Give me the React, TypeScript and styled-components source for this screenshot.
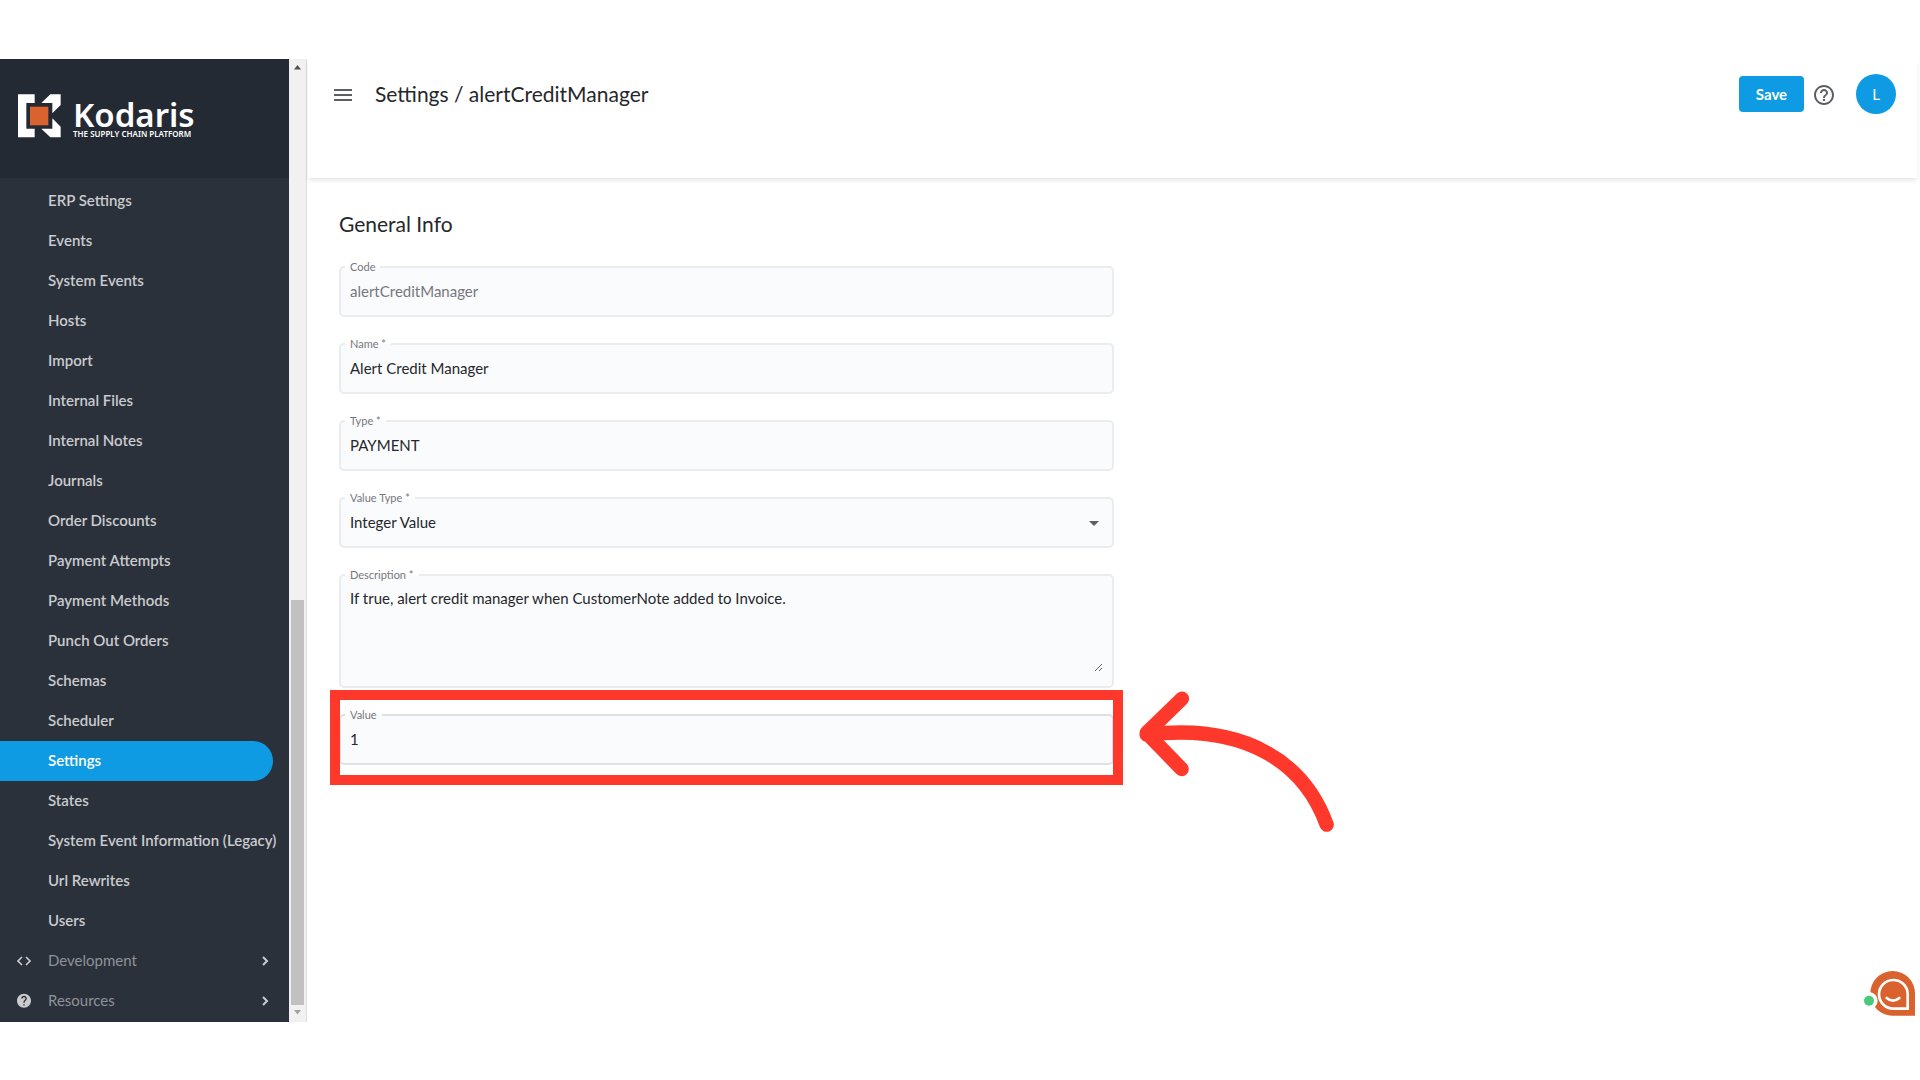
import React, { useId } from "react";
import styled, { createGlobalStyle, css } from "styled-components";

const GlobalStyle = createGlobalStyle`
  *, *::before, *::after { box-sizing: border-box; }
  body { margin: 0; background: #fff; }
  body, button, input, select, textarea {
    font-family: Lato, "Open Sans", sans-serif;
  }
`;

const Page = styled.div`
  display: flex;
  min-height: 100vh;
  padding: 59px 0 58px;
  color: #26272b;
`;

const Sidebar = styled.aside`
  display: flex;
  flex: none;
  width: 307px;
  border-right: 1px solid #dcdcdc;
`;

const SidebarBody = styled.div`
  display: flex;
  flex: 1;
  flex-direction: column;
  min-width: 0;
  background: #2b313b;
`;

const Brand = styled.a`
  display: flex;
  align-items: flex-start;
  gap: 12px;
  height: 119px;
  margin-bottom: 3px;
  padding: 35px 18px 0;
  background: #242a34;
  color: #fff;
  text-decoration: none;
`;

const BrandText = styled.span`
  display: flex;
  flex-direction: column;
  font-family: "Noto Sans", sans-serif;
`;

const BrandName = styled.span`
  padding-top: 6px;
  font-size: 33px;
  font-weight: 600;
  line-height: 30px;
`;

const Tagline = styled.span`
  font-size: 8px;
  font-weight: 600;
  line-height: 8px;
  white-space: nowrap;
`;

const NavList = styled.ul`
  flex: 1;
  margin: 0;
  padding: 0;
  list-style: none;
`;

const itemBox = css`
  display: flex;
  align-items: center;
  height: 40px;
  padding: 0 17px 2px;
  border: 0;
  font-size: 15px;
  line-height: 20px;
  white-space: nowrap;
  text-decoration: none;
`;

const NavLink = styled.a<{ $active?: boolean }>`
  ${itemBox}
  margin-right: 16px;
  padding: 0 0 2px 48px;
  border-radius: 0 20px 20px 0;
  background: ${(p) => (p.$active ? "#0f9be3" : "transparent")};
  color: ${(p) => (p.$active ? "#fff" : "#c9cbce")};
  font-weight: 600;
`;

const NavGroup = styled.button`
  ${itemBox}
  gap: 17px;
  width: 100%;
  background: none;
  color: #8f9297;
  text-align: left;
`;

const GroupName = styled.span`
  flex: 1;
`;

const Scrollbar = styled.div`
  display: flex;
  flex: none;
  flex-direction: column;
  align-items: center;
  justify-content: space-between;
  width: 17px;
  padding: 6px 0 7px;
  background: #f1f1f1;
`;

const Track = styled.div`
  display: flex;
  flex: 1;
  flex-direction: column;
  justify-content: flex-end;
  width: 13px;
  padding: 5px 0;
`;

const Thumb = styled.div`
  height: 43.5%;
  background: #c1c1c1;
`;

const Main = styled.main`
  position: relative;
  flex: 1;
  min-width: 0;
`;

const Header = styled.header`
  display: flex;
  align-items: center;
  margin: 0 3px 0 1px;
  padding: 15px 21px 64px 26px;
  box-shadow: 0 3px 5px -1px rgba(0, 0, 0, 0.12);
`;

const IconButton = styled.button`
  display: flex;
  padding: 2px 0 0;
  border: 0;
  background: none;
  color: #5d5f66;
`;

const Title = styled.h1`
  flex: 1;
  margin: 0 0 0 23px;
  font-size: 21px;
  font-weight: 400;
  line-height: 30px;
`;

const SaveButton = styled.button`
  width: 65px;
  height: 36px;
  margin-right: 8px;
  padding: 0;
  border: 0;
  border-radius: 4px;
  background: #0f9be3;
  color: #fff;
  font-size: 15px;
  font-weight: 700;
`;

const Avatar = styled.button`
  width: 40px;
  height: 40px;
  margin-left: 20px;
  padding: 0;
  border: 0;
  border-radius: 50%;
  background: #0f9be3;
  color: #fff;
  font-size: 15px;
`;

const Form = styled.form`
  display: flex;
  flex-direction: column;
  gap: 26px;
  max-width: 839px;
  padding: 30px 32px;
`;

const SectionTitle = styled.h2`
  margin: 0;
  font-size: 21px;
  font-weight: 400;
  line-height: 32px;
`;

const FieldBox = styled.div<{ $strong?: boolean }>`
  position: relative;
  display: flex;
  border: ${(p) => (p.$strong ? "2px solid #e0e1e2" : "2px solid #ebecee")};
  border-radius: 5px;
  background: #fafbfd;
`;

const FieldLabel = styled.label`
  position: absolute;
  top: -9px;
  left: 4px;
  padding: 0 5px;
  background: linear-gradient(#fff 50%, #fafbfd 50%);
  color: #76777c;
  font-size: 11px;
  line-height: 16px;
`;

const controlText = css`
  width: 100%;
  border: 0;
  outline: 0;
  background: transparent;
  color: #26272b;
  font-size: 15px;
  line-height: 20px;
`;

const TextInput = styled.input`
  ${controlText}
  height: 47px;
  padding: 0 9px 2px;
  &:disabled { color: #76777c; }
`;

const Select = styled.select`
  ${controlText}
  height: 47px;
  padding: 0 9px 2px;
  appearance: none;
`;

const Caret = styled.svg`
  position: absolute;
  top: 22px;
  right: 13px;
  pointer-events: none;
`;

const TextArea = styled.textarea`
  ${controlText}
  height: 85px;
  margin: 11px 9px 14px;
  padding: 1px 0;
  resize: vertical;
`;

const Highlight = styled.div`
  position: absolute;
  inset: -26px -11px -22px;
  border: 10px solid #ff382c;
  pointer-events: none;
`;

const Arrow = styled.svg`
  position: absolute;
  top: -28px;
  left: calc(100% + 27px);
  pointer-events: none;
`;

const ChatButton = styled.button`
  position: absolute;
  right: 5px;
  bottom: 4px;
  display: flex;
  padding: 0;
  border: 0;
  background: none;
`;

const LogoMark = () => (
  <svg width="43" height="44" viewBox="54 130 129 132" aria-hidden="true">
    <path fill="#fff" d="M54 131h50v26H79v77h25v26H54zM151 131h31v32l-25 25v-31h-33zM157 203l25 25v32h-31l-27-26h33z" />
    <path fill="#d9622f" d="M90 168h55v56H90z" />
  </svg>
);

const Chevron = () => (
  <svg width="14" height="14" viewBox="0 0 14 14" fill="none" stroke="#c9cbce" strokeWidth="2" aria-hidden="true">
    <path d="M5 4l4 4-4 4" />
  </svg>
);

const CodeIcon = () => (
  <svg width="14" height="14" viewBox="0 0 14 14" fill="none" stroke="#c9cbce" strokeWidth="1.6" aria-hidden="true">
    <path d="M5 4L1 8l4 4M9 4l4 4-4 4" />
  </svg>
);

const HelpFilled = () => (
  <svg width="14" height="16" viewBox="2 0 20 22" fill="#c9cbce" aria-hidden="true">
    <path d="M12 2C6.480 2 2 6.480 2 12s4.480 10 10 10 10-4.480 10-10S17.520 2 12 2zm1 17h-2v-2h2v2zm2.070-7.750l-.9.920C13.450 12.900 13 13.500 13 15h-2v-.5c0-1.100.450-2.100 1.170-2.830l1.240-1.260c.370-.360.590-.860.590-1.410 0-1.100-.9-2-2-2s-2 .9-2 2H8c0-2.210 1.790-4 4-4s4 1.790 4 4c0 .880-.360 1.680-.930 2.250z" />
  </svg>
);

const HelpOutline = () => (
  <svg width="24" height="24" viewBox="0 0 24 24" fill="currentColor" aria-hidden="true">
    <path d="M11 18h2v-2h-2v2zm1-16C6.480 2 2 6.480 2 12s4.480 10 10 10 10-4.480 10-10S17.520 2 12 2zm0 18c-4.410 0-8-3.590-8-8s3.590-8 8-8 8 3.590 8 8-3.590 8-8 8zm0-14c-2.210 0-4 1.790-4 4h2c0-1.100.9-2 2-2s2 .9 2 2c0 2-3 1.750-3 5h2c0-2.250 3-2.500 3-5 0-2.210-1.790-4-4-4z" />
  </svg>
);

const MenuIcon = () => (
  <svg width="18" height="12" viewBox="0 0 18 12" fill="currentColor" aria-hidden="true">
    <path d="M0 0h18v2H0zM0 5h18v2H0zM0 10h18v2H0z" />
  </svg>
);

const ScrollArrow = ({ down }: { down?: boolean }) => (
  <svg width="7" height="5" viewBox="0 0 7 5" fill={down ? "#a3a3a3" : "#505050"} aria-hidden="true">
    <path d={down ? "M0 0h7L3.500 4.500z" : "M0 4.500h7L3.500 0z"} />
  </svg>
);

const links = [
  "ERP Settings", "Events", "System Events", "Hosts", "Import", "Internal Files",
  "Internal Notes", "Journals", "Order Discounts", "Payment Attempts",
  "Payment Methods", "Punch Out Orders", "Schemas", "Scheduler", "Settings",
  "States", "System Event Information (Legacy)", "Url Rewrites", "Users",
];

type FieldProps = {
  label: string;
  strong?: boolean;
  after?: React.ReactNode;
  children: (id: string) => React.ReactNode;
};

function Field({ label, strong, after, children }: FieldProps) {
  const id = useId();
  return (
    <FieldBox $strong={strong}>
      <FieldLabel htmlFor={id}>{label}</FieldLabel>
      {children(id)}
      {after}
    </FieldBox>
  );
}

export default function App() {
  return (
    <>
      <GlobalStyle />
      <Page>
        <Sidebar>
          <SidebarBody>
            <Brand href="#home">
              <LogoMark />
              <BrandText>
                <BrandName>Kodaris</BrandName>
                <Tagline>THE SUPPLY CHAIN PLATFORM</Tagline>
              </BrandText>
            </Brand>
            <NavList>
              {links.map((name) => (
                <li key={name}>
                  <NavLink href="#" $active={name === "Settings"}>{name}</NavLink>
                </li>
              ))}
              <li>
                <NavGroup type="button"><CodeIcon /><GroupName>Development</GroupName><Chevron /></NavGroup>
              </li>
              <li>
                <NavGroup type="button"><HelpFilled /><GroupName>Resources</GroupName><Chevron /></NavGroup>
              </li>
            </NavList>
          </SidebarBody>
          <Scrollbar>
            <ScrollArrow />
            <Track><Thumb /></Track>
            <ScrollArrow down />
          </Scrollbar>
        </Sidebar>
        <Main>
          <Header>
            <IconButton type="button" aria-label="Menu"><MenuIcon /></IconButton>
            <Title>Settings / alertCreditManager</Title>
            <SaveButton type="button">Save</SaveButton>
            <IconButton type="button" aria-label="Help"><HelpOutline /></IconButton>
            <Avatar type="button">L</Avatar>
          </Header>
          <Form>
            <SectionTitle>General Info</SectionTitle>
            <Field label="Code">
              {(id) => <TextInput id={id} defaultValue="alertCreditManager" disabled />}
            </Field>
            <Field label="Name *">
              {(id) => <TextInput id={id} defaultValue="Alert Credit Manager" />}
            </Field>
            <Field label="Type *">
              {(id) => <TextInput id={id} defaultValue="PAYMENT" />}
            </Field>
            <Field
              label="Value Type *"
              after={<Caret width="10" height="5" viewBox="0 0 10 5"><path fill="#5d5f66" d="M0 0h10L5 5z" /></Caret>}
            >
              {(id) => <Select id={id}><option>Integer Value</option></Select>}
            </Field>
            <Field label="Description *">
              {(id) => <TextArea id={id} defaultValue="If true, alert credit manager when CustomerNote added to Invoice." />}
            </Field>
            <Field
              label="Value"
              strong
              after={
                <>
                  <Highlight />
                  <Arrow width="196" height="146" viewBox="418 624 588 438" fill="none" stroke="#ff382c" strokeWidth="43" strokeLinecap="round" strokeLinejoin="round">
                    <path d="M547 656L441 759L546 867M441 764C740 728 915 850 981 1034" />
                  </Arrow>
                </>
              }
            >
              {(id) => <TextInput id={id} defaultValue="1" />}
            </Field>
          </Form>
          <ChatButton type="button" aria-label="Chat">
            <svg width="52" height="48" viewBox="69 60 156 144" aria-hidden="true">
              <path fill="#d9622f" d="M225 197V130a67 67 0 1 0-67 67z" />
              <path fill="none" stroke="#fff" strokeWidth="8" d="M203 176V131a43 43 0 1 0-43 45z" />
              <path fill="none" stroke="#fff" strokeWidth="8" strokeLinecap="round" d="M140 144q19 16 38 0" />
              <circle cx="87" cy="152" r="26" fill="#fff" />
              <circle cx="87" cy="152" r="15" fill="#4bc97a" />
            </svg>
          </ChatButton>
        </Main>
      </Page>
    </>
  );
}
